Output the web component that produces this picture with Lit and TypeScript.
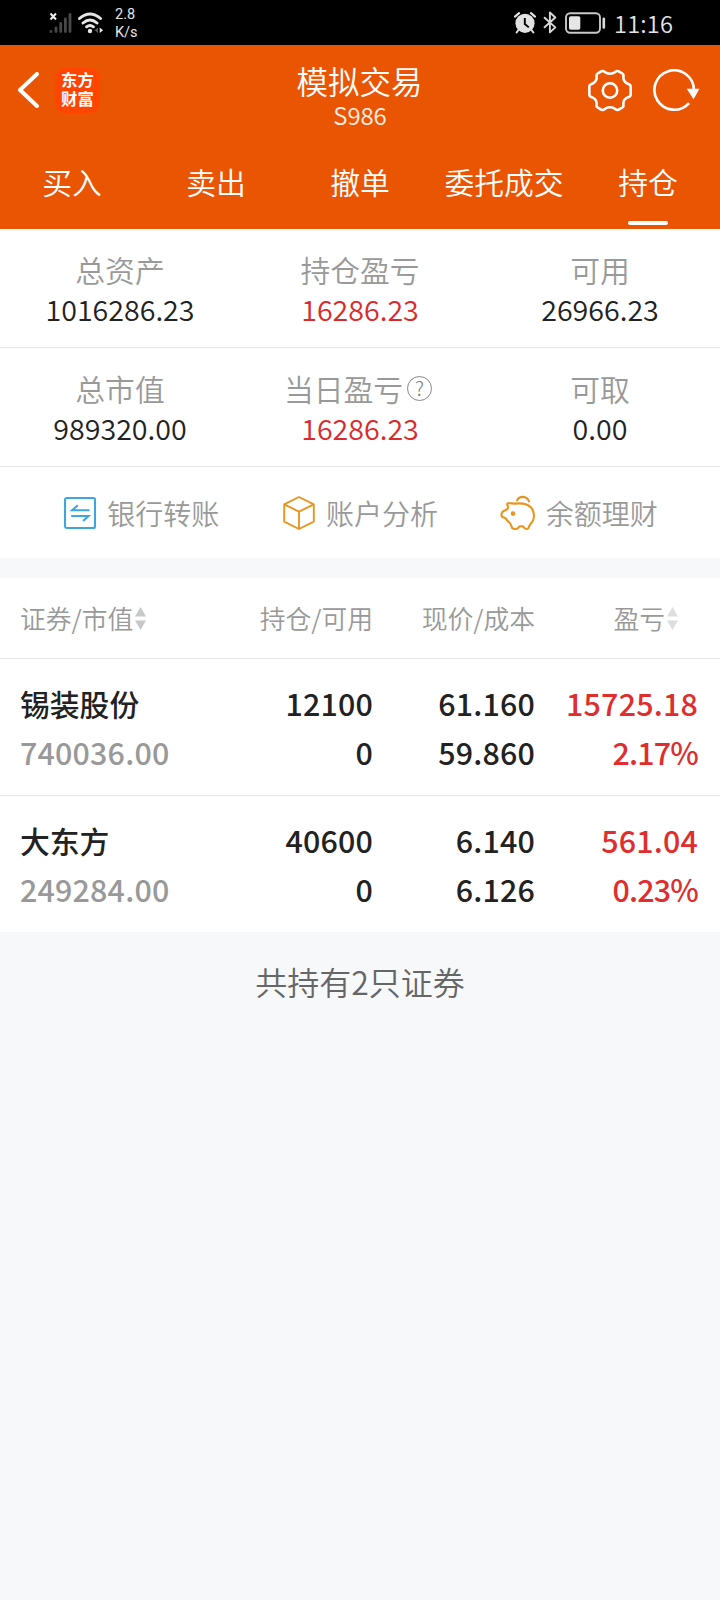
import { LitElement, html, css, svg } from "lit";
import { customElement, property } from "lit/decorators.js";

type Tone = "plain" | "rise";

interface Stat {
  label: string;
  value: string;
  tone?: Tone;
  help?: boolean;
}

interface Holding {
  name: string;
  marketValue: string;
  held: string;
  available: string;
  price: string;
  cost: string;
  profit: string;
  ratio: string;
}

const TABS = ["买入", "卖出", "撤单", "委托成交", "持仓"];

const STATS: Stat[][] = [
  [
    { label: "总资产", value: "1016286.23" },
    { label: "持仓盈亏", value: "16286.23", tone: "rise" },
    { label: "可用", value: "26966.23" },
  ],
  [
    { label: "总市值", value: "989320.00" },
    { label: "当日盈亏", value: "16286.23", tone: "rise", help: true },
    { label: "可取", value: "0.00" },
  ],
];

const HOLDINGS: Holding[] = [
  { name: "锡装股份", marketValue: "740036.00", held: "12100", available: "0", price: "61.160", cost: "59.860", profit: "15725.18", ratio: "2.17%" },
  { name: "大东方", marketValue: "249284.00", held: "40600", available: "0", price: "6.140", cost: "6.126", profit: "561.04", ratio: "0.23%" },
];

@customElement("status-bar")
class StatusBar extends LitElement {
  static styles = css`
    :host { display: flex; align-items: center; height: 45px; box-sizing: border-box; padding: 0 48px 0 49px; background: #000; color: #e4e4e4; }
    svg { display: block; flex: none; }
    .wifi { margin-left: 6px; }
    .rate { margin-left: 11px; font: 400 14.5px/18px Roboto, sans-serif; padding-top: 2px; }
    .right { margin-left: auto; display: flex; align-items: center; }
    .bt { margin-left: 7px; }
    .battery { margin-left: 8px; }
    .time { margin-left: 8px; width: 58px; white-space: nowrap; font: 350 23.6px/30px "Noto Sans CJK SC", sans-serif; letter-spacing: 0.2px; }
  `;
  render() {
    return html`
      <svg width="23" height="22" viewBox="0 0 23 22">
        <path d="M1.5 1.5l5.5 6M7 1.5l-5.5 6" stroke="#eee" stroke-width="2" />
        <g stroke="#484848" stroke-width="2.8" stroke-linecap="round">
          <path d="M2 19.5v.1M7 16v3.5M11.7 11.5v8M16.4 7v12.5M21 2.5v17" />
        </g>
      </svg>
      <svg class="wifi" width="26" height="22" viewBox="0 0 26 22">
        <g fill="none" stroke="#e6e6e6" stroke-width="2.9" stroke-linecap="round">
          <path d="M1.5 6.5Q12 -2.5 22.5 6.5M5 11Q12 5 19 11M8.6 14.8Q12 12 15.4 14.8" />
        </g>
        <circle cx="12" cy="19" r="2.2" fill="#e6e6e6" />
        <path d="M20 15.5v5.5l-3.4-2.7z" fill="#555" />
        <path d="M21.7 15.5v5.5l3.4-2.7z" fill="#e6e6e6" />
      </svg>
      <div class="rate">2.8<br />K/s</div>
      <div class="right">
        <svg width="22" height="22" viewBox="0 0 22 22">
          <circle cx="11" cy="11.3" r="9.6" fill="#e2e2e2" />
          <path d="M1 4.6L5 1.2M21 4.6L17 1.2" stroke="#e2e2e2" stroke-width="2.2" stroke-linecap="round" />
          <path d="M4.5 18L2.6 20.5M17.5 18l1.9 2.5" stroke="#e2e2e2" stroke-width="2" stroke-linecap="round" />
          <path d="M10.8 6v6l4 3.4" fill="none" stroke="#000" stroke-width="1.9" />
        </svg>
        <svg class="bt" width="14" height="23" viewBox="0 0 14 23">
          <path d="M1 6.2l11.3 10.2-5.4 5V1.5l5.4 5L1 16.8" fill="none" stroke="#d8d8d8" stroke-width="1.9" stroke-linejoin="round" />
        </svg>
        <svg class="battery" width="41" height="22" viewBox="0 0 41 22">
          <rect x="1" y="1.2" width="34" height="19.6" rx="4.2" fill="none" stroke="#c9c9c9" stroke-width="1.9" />
          <rect x="4" y="4.2" width="11.3" height="13.6" rx="1.8" fill="#e6e6e6" />
          <path d="M38.8 6.8v8.6" stroke="#dcdcdc" stroke-width="2.6" stroke-linecap="round" />
        </svg>
        <div class="time">11:16</div>
      </div>
    `;
  }
}

const gear = svg`<path d="M16.8 3 C19.6 5.4 24.6 5.4 27.4 3 C28.5 2 29.2 1.6 30.5 2.2 L34.4 4.4 C35.8 5.2 36 6 35.7 7.5 C35.1 11 37.5 14.6 41 15.3 C42.5 15.7 43 16.4 43 17.8 V25.7 C43 27.1 42.5 27.8 41 28.3 C37.5 29.2 35.1 32.6 35.7 36 C36 37.5 35.8 38.3 34.4 39.1 L30.5 41.3 C29.2 41.9 28.5 41.5 27.4 40.5 C24.6 38.1 19.6 38.1 16.8 40.5 C15.7 41.5 15 41.9 13.7 41.3 L9.8 39.1 C8.4 38.3 8.2 37.5 8.5 36 C9.1 32.6 6.7 29.2 3.2 28.3 C1.7 27.8 1.2 27.1 1.2 25.7 V17.8 C1.2 16.4 1.7 15.7 3.2 15.3 C6.7 14.6 9.1 11 8.5 7.5 C8.2 6 8.4 5.2 9.8 4.4 L13.7 2.2 C15 1.6 15.7 2 16.8 3 Z" />`;

@customElement("trade-header")
class TradeHeader extends LitElement {
  static styles = css`
    :host { display: block; height: 184px; background: #ea5504; color: #fff; }
    .bar { display: grid; grid-template-columns: 1fr auto 1fr; height: 90px; }
    .left { display: flex; align-items: center; padding-left: 17px; }
    .logo { width: 45px; height: 45px; box-sizing: border-box; margin-left: 16px; padding-top: 2px; border-radius: 10px; background: #ff4500; text-align: center; font-weight: 700; font-size: 16.4px; line-height: 19.5px; }
    .heading { text-align: center; padding-top: 12px; }
    .title { font-size: 31.5px; line-height: 46px; font-weight: 350; margin-left: -1px; }
    .account { font-size: 24px; line-height: 23px; font-weight: 350; color: #fff0e2; letter-spacing: -0.1px; }
    .right { display: flex; align-items: center; justify-content: flex-end; gap: 21px; padding-right: 20px; }
    svg { display: block; flex: none; }
    .tabs { display: grid; grid-template-columns: repeat(5, 1fr); height: 94px; }
    .tab { display: flex; flex-direction: column; align-items: center; font-size: 29.8px; line-height: 44px; padding-top: 24px; font-weight: 350; white-space: nowrap; }
    .tab.on::after { content: ""; width: 40px; height: 4px; border-radius: 2px; background: #fff; margin-top: 18px; }
  `;
  render() {
    return html`
      <div class="bar">
        <div class="left">
          <svg width="22" height="36" viewBox="0 0 22 36"><path d="M20 2L3 18l17 16" fill="none" stroke="#fff" stroke-width="4" stroke-linecap="round" stroke-linejoin="round" /></svg>
          <div class="logo">东方<br />财富</div>
        </div>
        <div class="heading">
          <div class="title">模拟交易</div>
          <div class="account">S986</div>
        </div>
        <div class="right">
          <svg width="44" height="43" viewBox="0 0 44.2 43.5"><g fill="none" stroke="#fff" stroke-width="2.6" stroke-linejoin="round">
            ${gear}
            <circle cx="22.1" cy="21.8" r="7.3" />
          </g></svg>
          <svg width="47" height="43" viewBox="0 0 48 44">
            <path d="M36.8 34.8A20.2 20.2 0 1 1 41.8 21" fill="none" stroke="#fff" stroke-width="2.7" />
            <path d="M34.5 20.2h13L41.4 31z" fill="#fff" />
          </svg>
        </div>
      </div>
      <div class="tabs">
        ${TABS.map((t, i) => html`<div class="tab ${i === TABS.length - 1 ? "on" : ""}">${t}</div>`)}
      </div>
    `;
  }
}

@customElement("asset-summary")
class AssetSummary extends LitElement {
  static styles = css`
    :host { display: block; background: #fff; }
    .row { display: grid; grid-template-columns: repeat(3, 1fr); height: 119px; box-sizing: border-box; border-bottom: 1px solid #e6e6e6; padding-top: 18px; text-align: center; }
    .label { display: flex; align-items: center; justify-content: center; gap: 4px; font-size: 29.8px; line-height: 44px; color: #999; font-weight: 350; }
    .value { font-size: 28.6px; line-height: 36px; color: #222; font-weight: 350; }
    .value.rise { color: #d92b2b; }
    .help { box-sizing: border-box; width: 25px; height: 25px; border: 1.3px solid #888; border-radius: 50%; font-size: 20px; line-height: 21px; color: #777; margin-right: 4px; font-weight: 300; }
  `;
  render() {
    return STATS.map(
      (row) => html`<div class="row">
        ${row.map(
          (s) => html`<div>
            <div class="label">${s.label}${s.help ? html`<span class="help">?</span>` : ""}</div>
            <div class="value ${s.tone ?? "plain"}">${s.value}</div>
          </div>`
        )}
      </div>`
    );
  }
}

@customElement("quick-actions")
class QuickActions extends LitElement {
  static styles = css`
    :host { display: grid; grid-template-columns: repeat(3, 1fr); height: 91px; padding: 0 32px; background: #fff; }
    .action { display: flex; align-items: center; justify-content: center; gap: 10px; font-size: 28px; line-height: 40px; color: #999; font-weight: 350; white-space: nowrap; }
    svg { display: block; flex: none; margin-top: 1px; }
  `;
  render() {
    return html`
      <div class="action">
        <svg width="34" height="34" viewBox="0 0 34 34" fill="none" stroke="#3fa5e0" stroke-width="2.1">
          <rect x="2" y="2" width="30" height="30" rx="1.8" />
          <path d="M26.5 14.2H9.2l5.6-5M8.2 20h17.3l-5.4 5" />
        </svg>
        <span>银行转账</span>
      </div>
      <div class="action">
        <svg width="34" height="36" viewBox="0 0 34 36" fill="none" stroke="#e8951f" stroke-width="1.9" stroke-linejoin="round">
          <path d="M17 2l14.8 7.4v17.2L17 34 2.2 26.6V9.4zM2.2 9.4L17 16.6l14.8-7.2M17 16.6V34" />
        </svg>
        <span>账户分析</span>
      </div>
      <div class="action">
        <svg width="36" height="36" viewBox="0 0 36 36" fill="none" stroke="#e8951f" stroke-width="2.1" stroke-linejoin="round" stroke-linecap="round">
          <path d="M7.6 8.3C10 7.9 12.5 8.6 14.5 8.6C20 8 26.5 8 30.5 12C35 16.5 35.5 24 30.3 29.2L28.2 33.2C27.6 34.2 25.2 34.2 24.4 33L22.8 31.2H19.8L18 33C17 34.2 13.4 34.3 12.2 33C11.2 30.8 11 28.6 8.8 27C6.8 25.4 6.2 23.6 4.6 22.8C2 22.2 1.2 21.2 1.4 19.6C1.5 17.8 1.9 16.8 3.6 16C5.8 15.2 8 13.4 8.2 12.4C8.3 11 6.4 9.6 7.6 8.3Z" />
          <path d="M17 5.4C19.4 .6 26.8 .5 29 6.4" />
          <circle cx="13" cy="18.6" r="1.7" fill="#e8951f" stroke-width="1.2" />
        </svg>
        <span>余额理财</span>
      </div>
    `;
  }
}

@customElement("sort-arrows")
class SortArrows extends LitElement {
  @property({ type: Boolean }) faint = false;
  static styles = css`
    :host { display: block; }
    svg { display: block; }
  `;
  render() {
    const tint = this.faint ? "#dedede" : "#c8c8c8";
    return html`<svg width="11" height="23" viewBox="0 0 11 23">
      <path d="M5.5 0L11 9.4H0zM5.5 23L11 13.6H0z" fill=${tint} />
    </svg>`;
  }
}

@customElement("holdings-table")
class HoldingsTable extends LitElement {
  static styles = css`
    :host { display: block; background: #fff; }
    .line { display: grid; grid-template-columns: 190px 163px 162px 163px; padding: 0 21px 0 20px; box-sizing: border-box; }
    .line > * { text-align: right; }
    .line > :first-child { text-align: left; }
    .line.head { height: 81px; border-bottom: 1px solid #e6e6e6; font-size: 25.8px; line-height: 38px; padding-top: 21px; color: #999; font-weight: 350; white-space: nowrap; }
    .sortable { display: flex; align-items: center; gap: 2px; height: 38px; }
    .last { justify-content: flex-end; padding-right: 20px; }
    .line.holding { height: 136px; padding-top: 20px; font-size: 30.4px; line-height: 49px; font-weight: 500; color: #222; letter-spacing: 0.2px; }
    .line.holding + .holding { border-top: 1px solid #e6e6e6; height: 137px; }
    .name { font-size: 29.8px; letter-spacing: 0; }
    .muted { color: #999; }
    .rise { color: #e02d2d; }
    .ratio { letter-spacing: -0.8px; }
  `;
  render() {
    return html`
      <div class="line head">
        <div class="sortable">证券/市值<sort-arrows></sort-arrows></div>
        <div>持仓/可用</div>
        <div>现价/成本</div>
        <div class="sortable last">盈亏<sort-arrows faint></sort-arrows></div>
      </div>
      ${HOLDINGS.map(
        (h) => html`<div class="line holding">
          <div><div class="name">${h.name}</div><div class="muted">${h.marketValue}</div></div>
          <div>${h.held}<br />${h.available}</div>
          <div>${h.price}<br />${h.cost}</div>
          <div class="rise">${h.profit}<br /><span class="ratio">${h.ratio}</span></div>
        </div>`
      )}
    `;
  }
}

@customElement("app-root")
class AppRoot extends LitElement {
  static styles = css`
    :host { display: block; width: 720px; min-height: 1600px; background: #f7f8fa; font-family: "Noto Sans CJK SC", "Noto Sans", sans-serif; }
    .holdings { margin-top: 20px; }
    .total { padding-top: 25px; text-align: center; font-size: 32px; line-height: 48px; font-weight: 350; color: #666; }
  `;
  render() {
    return html`
      <status-bar></status-bar>
      <trade-header></trade-header>
      <asset-summary></asset-summary>
      <quick-actions></quick-actions>
      <holdings-table class="holdings"></holdings-table>
      <div class="total">共持有${HOLDINGS.length}只证券</div>
    `;
  }
}
